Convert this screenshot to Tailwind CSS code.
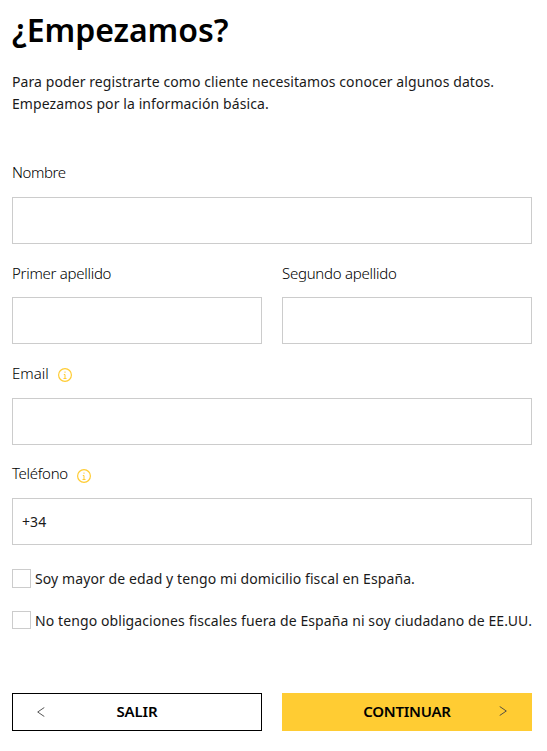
<!DOCTYPE html>
<html lang="es">

<head>
    <meta charset="UTF-8">
    <meta name="viewport" content="width=device-width, initial-scale=1.0">
    <title>Registro</title>
    <script src="https://cdn.jsdelivr.net/npm/@tailwindcss/browser@4"></script>
</head>

<body class="bg-white text-black font-['Noto_Sans','Open_Sans',sans-serif] text-[15px]">
    <main class="w-[532px] pl-3 pt-[7px]">
        <!-- Heading -->
        <h1 class="h-[46px] text-[32px] leading-[46px] font-semibold whitespace-nowrap"><span class="tracking-[-0.05px]">¿Empezamos?</span></h1>
        <p class="mt-[18px] h-11 text-sm leading-[22px] tracking-[0.085px] whitespace-nowrap text-[#1a1a1a]">
            Para poder registrarte como cliente necesitamos conocer algunos datos.<br>
            Empezamos por la información básica.
        </p>

        <form class="mt-[45px]">
            <!-- Name -->
            <div class="h-[101px]">
                <label for="nombre" class="flex h-[37px] items-start leading-6 font-light"><span class="tracking-[-0.4px]">Nombre</span></label>
                <input id="nombre" type="text" class="block h-[47px] w-full border border-[#cccccc] px-[9px]">
            </div>

            <!-- Surnames -->
            <div class="grid h-[100px] grid-cols-2 gap-5">
                <div>
                    <label for="apellido1" class="flex h-9 items-start leading-6 font-light"><span class="tracking-[-0.28px]">Primer apellido</span></label>
                    <input id="apellido1" type="text" class="block h-[47px] w-full border border-[#cccccc] px-[9px]">
                </div>
                <div>
                    <label for="apellido2" class="flex h-9 items-start leading-6 font-light"><span class="tracking-[-0.26px]">Segundo apellido</span></label>
                    <input id="apellido2" type="text" class="block h-[47px] w-full border border-[#cccccc] px-[9px]">
                </div>
            </div>

            <!-- Contact -->
            <div class="h-[100px]">
                <label for="email" class="flex h-[37px] items-start leading-6 font-light">
                    <span class="w-[46px] tracking-[0px]">Email</span>
                    <svg class="mt-[7px] size-[14px]" viewBox="0 0 14 14" fill="none" stroke="#ffcc33">
                        <circle cx="7" cy="7" r="6.4" stroke-width="1.2" />
                        <path d="M7 3.5v1.3M5.8 6.5H7v4M5.5 10.5h3" />
                    </svg>
                </label>
                <input id="email" type="email" class="block h-[47px] w-full border border-[#cccccc] px-[9px]">
            </div>
            <div class="h-[108px]">
                <label for="telefono" class="flex h-[37px] items-start leading-6 font-light">
                    <span class="w-[65px] tracking-[-0.3px]">Teléfono</span>
                    <svg class="mt-[8px] size-[14px]" viewBox="0 0 14 14" fill="none" stroke="#ffcc33">
                        <circle cx="7" cy="7" r="6.4" stroke-width="1.2" />
                        <path d="M7 3.5v1.3M5.8 6.5H7v4M5.5 10.5h3" />
                    </svg>
                </label>
                <input id="telefono" type="tel" value="+34" class="block h-[47px] w-full border border-[#cccccc] px-[9px] text-sm tracking-[0.1px] text-[#1a1a1a]">
            </div>

            <!-- Conditions -->
            <label class="flex h-[42px] items-start text-sm tracking-[0.095px] whitespace-nowrap text-[#1a1a1a]">
                <input type="checkbox" class="mr-1 size-[19px] shrink-0 appearance-none border border-[#cccccc]">
                <span class="leading-[19px]">Soy mayor de edad y tengo mi domicilio fiscal en España.</span>
            </label>
            <label class="flex h-[82px] items-start text-sm tracking-[0.095px] whitespace-nowrap text-[#1a1a1a]">
                <input type="checkbox" class="mr-1 h-[18px] w-[19px] shrink-0 appearance-none border border-[#cccccc]">
                <span class="leading-[19px]">No tengo obligaciones fiscales fuera de España ni soy ciudadano de EE.UU.</span>
            </label>

            <!-- Actions -->
            <div class="grid grid-cols-2 gap-5">
                <button type="button" class="relative h-[38px] border border-black bg-white pb-[2px] font-semibold">
                    <svg class="absolute top-[13px] left-6 h-[10px] w-2" viewBox="0 0 8 10" fill="none" stroke="#444444" stroke-width="0.9">
                        <path d="M7.3 0.5L0.7 5l6.6 4.5" />
                    </svg>
                    <span class="tracking-[-0.1px]">SALIR</span>
                </button>
                <button type="button" class="relative h-[38px] bg-[#ffcc33] pb-[2px] font-semibold">
                    <span class="tracking-[-0.25px]">CONTINUAR</span>
                    <svg class="absolute top-[13px] right-[25px] h-[10px] w-2" viewBox="0 0 8 10" fill="none" stroke="#444444" stroke-width="0.9">
                        <path d="M0.7 0.5L7.3 5 0.7 9.5" />
                    </svg>
                </button>
            </div>
        </form>
    </main>
</body>

</html>
